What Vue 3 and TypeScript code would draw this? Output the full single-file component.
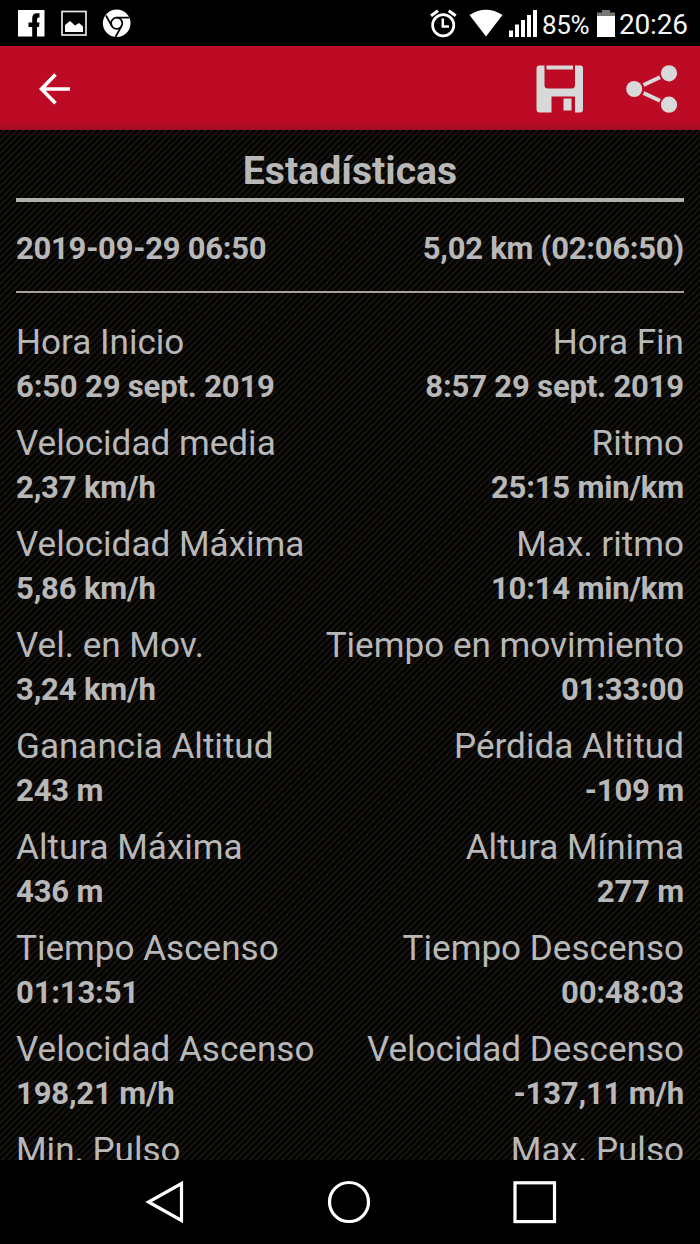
<script setup lang="ts">
interface Stat {
  label: string
  value: string
}

const rows: [Stat, Stat][] = [
  [{ label: 'Hora Inicio', value: '6:50 29 sept. 2019' }, { label: 'Hora Fin', value: '8:57 29 sept. 2019' }],
  [{ label: 'Velocidad media', value: '2,37 km/h' }, { label: 'Ritmo', value: '25:15 min/km' }],
  [{ label: 'Velocidad Máxima', value: '5,86 km/h' }, { label: 'Max. ritmo', value: '10:14 min/km' }],
  [{ label: 'Vel. en Mov.', value: '3,24 km/h' }, { label: 'Tiempo en movimiento', value: '01:33:00' }],
  [{ label: 'Ganancia Altitud', value: '243 m' }, { label: 'Pérdida Altitud', value: '-109 m' }],
  [{ label: 'Altura Máxima', value: '436 m' }, { label: 'Altura Mínima', value: '277 m' }],
  [{ label: 'Tiempo Ascenso', value: '01:13:51' }, { label: 'Tiempo Descenso', value: '00:48:03' }],
  [{ label: 'Velocidad Ascenso', value: '198,21 m/h' }, { label: 'Velocidad Descenso', value: '-137,11 m/h' }],
  [{ label: 'Min. Pulso', value: '' }, { label: 'Max. Pulso', value: '' }],
]
</script>

<template>
  <div class="screen">
    <header class="status">
      <svg class="status-left" width="160" height="46" viewBox="0 0 160 46">
        <path fill="#fff" d="M18 10H44.500V36.500H37V27H39L39.500 22.500H37V19.500Q37 17.500 38.800 17.500H39.500V13.300H37Q32.200 13.300 32.200 18.500V22.500H28.500V27H32.200V36.500H18Z" />
        <rect x="62" y="11.500" width="24" height="23.500" fill="none" stroke="#e8e8e8" stroke-width="1.700" />
        <path fill="#fff" d="M65 32V25L70 21L75 25.500L79 23L83 26.500V32Z" />
        <circle cx="116.700" cy="23.300" r="13.800" fill="#fff" />
        <g fill="none" stroke="#000" stroke-width="1.700">
          <circle cx="116.700" cy="23.300" r="5.600" />
          <path d="M116.700 17.700H129M111.800 26L106 15.500M121.500 26L115.500 37" />
        </g>
      </svg>
      <div class="status-right">
        <svg width="110" height="46" viewBox="428 0 110 46">
          <g fill="none" stroke="#fff">
            <circle cx="443.200" cy="25.200" r="10.600" stroke-width="2.700" />
            <path stroke-width="2.500" d="M442.800 18.500V26.500H449" />
            <path stroke-width="3.200" d="M431 15.700L438 10.800M448.700 10.800L455.700 15.700" />
          </g>
          <path fill="#fff" d="M469.500 15Q486 4.500 502.500 15L486 36.500Z" />
          <path fill="#fff" d="M509 30.500h4v6.500h-4zM515 24.500h4v12.500h-4zM521 20h4v17h-4zM527 15h4v22h-4zM533 10h4v27h-4z" />
        </svg>
        <span class="percent">85%</span>
        <svg class="battery" width="18" height="46" viewBox="0 0 18 46">
          <path fill="#777" d="M5 10h8v2.500h5v3.500H0v-3.500h5z" />
          <path fill="#fff" d="M0 16h18v21H0z" />
        </svg>
        <span class="clock">20:26</span>
      </div>
    </header>

    <nav class="toolbar">
      <svg width="34" height="34" viewBox="38 71 34 34">
        <path fill="none" stroke="#fff" stroke-width="3.600" d="M70 88H41.500M55.500 73.500L41.500 88L55.500 102.300" />
      </svg>
      <div class="actions">
        <svg width="48" height="48" viewBox="0 0 48 48">
          <path fill="#d9d9d9" fill-rule="evenodd" d="M3.500 0.500H8.500V20Q8.500 23.500 12 23.500H35.500Q39 23.500 39 20V0.500H44.500Q47 0.500 47 3V44.500Q47 47.500 44 47.500H39V31.500H15.500V47.500H3.500Q0.500 47.500 0.500 44.500V3.500Q0.500 0.500 3.500 0.500Z" />
          <path fill="#d9d9d9" d="M10.500 0.500H37V4.500H10.500ZM27.500 33.500H35.500V45.500H27.500Z" />
        </svg>
        <svg width="52" height="48" viewBox="0 0 52 48">
          <g fill="#d9d9d9">
            <circle cx="8.200" cy="24" r="8" />
            <circle cx="43" cy="8.300" r="8.100" />
            <circle cx="43" cy="39.700" r="8.100" />
          </g>
          <path fill="none" stroke="#d9d9d9" stroke-width="4" d="M17.500 20L34 12.200M17.500 28L34 35.800" />
        </svg>
      </div>
    </nav>

    <main class="content">
      <h1 class="title">Estadísticas</h1>
      <section class="summary">
        <span>2019-09-29 06:50</span>
        <span>5,02 km (02:06:50)</span>
      </section>
      <section class="stats">
        <div v-for="(row, i) in rows" :key="i" class="row">
          <div v-for="stat in row" :key="stat.label" class="cell">
            <div class="label">{{ stat.label }}</div>
            <div class="value">{{ stat.value }}</div>
          </div>
        </div>
      </section>
    </main>

    <footer class="navbar">
      <svg width="700" height="84" viewBox="0 1160 700 84">
        <g fill="none" stroke="#fff" stroke-width="3.200">
          <path d="M181.500 1183.500V1220.500L148.500 1202Z" />
          <circle cx="349" cy="1202" r="19.500" />
          <rect x="515" y="1182.800" width="39.500" height="38.800" />
        </g>
      </svg>
    </footer>
  </div>
</template>

<style>
body {
  background: #000;
}
</style>

<style scoped>
.screen {
  width: 700px;
  height: 1244px;
  overflow: hidden;
  display: flex;
  flex-direction: column;
  background: #000;
  color: #b8b8b8;
  font-family: Roboto, "Noto Sans", sans-serif;
}
svg {
  display: block;
  flex: none;
}
.status {
  height: 46px;
  flex: none;
  display: flex;
  justify-content: space-between;
  color: #f5f5f5;
}
.status-right {
  width: 272px;
  display: flex;
  line-height: 50px;
  white-space: nowrap;
}
.percent {
  width: 54px;
  margin-left: 4px;
  font-size: 26px;
  letter-spacing: -0.4px;
}
.battery {
  margin-left: 1px;
}
.clock {
  margin-left: 4px;
  font-size: 28px;
  letter-spacing: -0.2px;
}
.toolbar {
  height: 84px;
  flex: none;
  box-sizing: border-box;
  padding: 1px 22px 0 38px;
  display: flex;
  align-items: center;
  justify-content: space-between;
  background: linear-gradient(#bd0a25 0, #bd0a25 74px, #a00d20 84px);
}
.actions {
  display: flex;
  gap: 42px;
}
.content {
  height: 1030px;
  flex: none;
  box-sizing: border-box;
  padding: 0 16px;
  overflow: hidden;
  background: repeating-linear-gradient(135deg, #020201 0, #020201 1.400px, #1b1715 2.800px, #1b1715 3.100px, #020201 4.600px);
}
.title {
  height: 68px;
  margin: 0;
  border-bottom: 4px solid #b0b0ac;
  font-size: 39.200px;
  line-height: 82px;
  text-align: center;
  white-space: nowrap;
}
.summary {
  height: 89px;
  display: flex;
  justify-content: space-between;
  border-bottom: 2px solid #a4a09d;
  font-size: 31px;
  font-weight: 700;
  letter-spacing: -0.250px;
  line-height: 94px;
}
.stats {
  padding-top: 27px;
}
.row {
  height: 101px;
  display: flex;
  justify-content: space-between;
  white-space: nowrap;
}
.cell:last-child {
  text-align: right;
}
.label {
  height: 44px;
  font-size: 35.100px;
  line-height: 44px;
}
.value {
  font-size: 31.100px;
  font-weight: 700;
  letter-spacing: -0.200px;
  line-height: 46px;
}
.navbar {
  height: 84px;
  flex: none;
}
</style>
